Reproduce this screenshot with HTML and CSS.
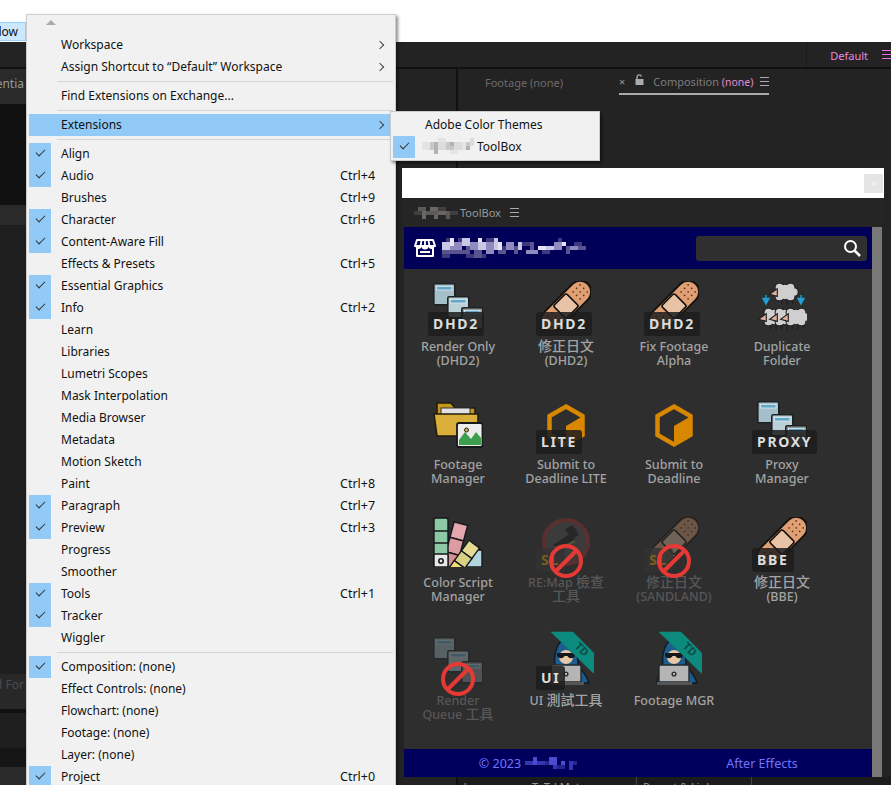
FILE: index.html
```html
<!DOCTYPE html>
<html lang="en">
  <head>
    <meta charset="UTF-8" />
    <meta name="viewport" content="width=device-width, initial-scale=1.0" />
    <link rel="stylesheet" href="styles.css">
    <title>ToolBox</title>
  </head>

  <body>
    <!-- shared icon drawings -->
    <svg class="defs" width="0" height="0">
      <defs>
        <g id="win">
          <rect x="0.8" y="0.8" width="21" height="21" rx="1.5" stroke="#1b2225" stroke-width="1.6" />
          <rect x="3.5" y="3.5" width="15.5" height="3.5" fill="#5fa8cc" stroke="#dfe8ec" stroke-width="0.8" />
        </g>
        <symbol id="icon-windows" viewBox="0 0 50 50">
          <use href="#win" x="0" y="2" fill="#a5c0ca" />
          <use href="#win" x="14" y="15" fill="#bcd0d8" />
          <use href="#win" x="28" y="26" fill="#8f9598" />
        </symbol>
        <symbol id="icon-bandage" viewBox="0 0 50 50">
          <g transform="rotate(-45 25 25)">
            <rect x="-6" y="14" width="62" height="22" rx="11" fill="#e0a074" stroke="#17130f" stroke-width="2" />
            <g fill="#5c3a22">
              <circle cx="40" cy="20" r="0.9" /><circle cx="45" cy="20" r="0.9" /><circle cx="50" cy="20" r="0.9" />
              <circle cx="40" cy="25" r="0.9" /><circle cx="45" cy="25" r="0.9" /><circle cx="50" cy="25" r="0.9" />
              <circle cx="40" cy="30" r="0.9" /><circle cx="45" cy="30" r="0.9" /><circle cx="50" cy="30" r="0.9" />
              <circle cx="0" cy="20" r="0.9" /><circle cx="5" cy="20" r="0.9" /><circle cx="10" cy="20" r="0.9" />
              <circle cx="0" cy="25" r="0.9" /><circle cx="5" cy="25" r="0.9" /><circle cx="10" cy="25" r="0.9" />
              <circle cx="0" cy="30" r="0.9" /><circle cx="5" cy="30" r="0.9" /><circle cx="10" cy="30" r="0.9" />
            </g>
            <rect x="16" y="16" width="18" height="18" rx="2" fill="#e8c3a5" stroke="#17130f" stroke-width="1.6" />
          </g>
        </symbol>
        <g id="sheep">
          <path d="M-3 7v4M2 8v4M7 7v4" stroke="#222" stroke-width="1.4" />
          <g fill="#222">
            <circle cx="0" cy="0" r="7.5" /><circle cx="-5" cy="-4" r="4.5" /><circle cx="5" cy="-4" r="4.5" />
            <circle cx="-5" cy="4" r="4.5" /><circle cx="5" cy="4" r="4.5" /><circle cx="8" cy="0" r="4.5" />
          </g>
          <g fill="#cfcfcf">
            <circle cx="0" cy="0" r="6.5" /><circle cx="-5" cy="-4" r="3.5" /><circle cx="5" cy="-4" r="3.5" />
            <circle cx="-5" cy="4" r="3.5" /><circle cx="5" cy="4" r="3.5" /><circle cx="8" cy="0" r="3.5" />
          </g>
          <path d="M-7 -3L-14 2L-7 4z" fill="#e3b09c" stroke="#222" stroke-width="1" />
        </g>
        <symbol id="icon-sheep" viewBox="0 0 50 50">
          <use href="#sheep" transform="translate(28 11) scale(1.1)" />
          <path d="M9 14v4M6 17.5h6L9 23zM44 14v4M41 17.5h6L44 23z" fill="#1f9fd6" stroke="#1f9fd6" stroke-width="1.4" />
          <use href="#sheep" transform="translate(17 36) scale(1.1)" />
          <use href="#sheep" transform="translate(28 36) scale(1.1)" />
          <use href="#sheep" transform="translate(39 36) scale(1.1)" />
        </symbol>
        <symbol id="icon-folder" viewBox="0 0 50 50">
          <path d="M4 4h14l4 5h20v12H4z" fill="#c2951c" stroke="#221c0c" stroke-width="1.6" />
          <rect x="8" y="9" width="29" height="10" fill="#e2e2e2" stroke="#333" />
          <path d="M1 15h44v22H4z" fill="#d9ae39" stroke="#221c0c" stroke-width="1.6" />
          <rect x="24" y="24" width="25.5" height="24" rx="2" fill="#ececec" stroke="#15191a" stroke-width="1.8" />
          <circle cx="33.5" cy="31" r="2" fill="#d9ae39" stroke="#222" />
          <path d="M26 46V41L32 33L38 40L43 33L48 39V46z" fill="#3d9e4e" />
        </symbol>
        <symbol id="icon-hex" viewBox="0 0 50 50">
          <path d="M25 7.5L41.5 17V36L25 45.5L8.5 36V17z" fill="none" stroke="#d98600" stroke-width="4.5" />
          <path d="M25 46V27L42 17V36z" fill="#d98600" />
        </symbol>
        <symbol id="icon-fan" viewBox="0 0 50 50">
          <g stroke="#15191a" stroke-width="1.4">
            <rect x="16" y="33" width="17" height="17" rx="1" fill="#a5d2e3" />
            <rect x="33" y="33" width="16" height="17" rx="1" fill="#b3d5df" />
            <g transform="rotate(15 8 50)">
              <rect x="9" y="3" width="14" height="16" fill="#e4a7ad" />
              <rect x="9" y="19" width="14" height="15" fill="#dd9ba2" />
              <path d="M9 34h14v14H9z" fill="#d98e97" />
            </g>
            <g transform="rotate(36 8 50)">
              <rect x="15" y="12" width="13" height="13" fill="#e4da94" />
              <rect x="15" y="25" width="13" height="12" fill="#d9cf85" />
              <path d="M15 37h13L15 50z" fill="#f0e070" />
            </g>
            <rect x="1" y="1" width="14" height="49" rx="2" fill="#8ec9a6" />
            <path d="M1 14h14M1 26h14" />
            <rect x="1" y="37" width="14" height="13" rx="1" fill="#e8e8e8" />
          </g>
          <circle cx="8" cy="44" r="2.2" fill="#e8e8e8" stroke="#15191a" stroke-width="1.6" />
        </symbol>
        <symbol id="icon-hacker" viewBox="0 0 50 50" overflow="visible">
          <path d="M8 48C9 40 11 36 14 32C12 16 18 5 24 5C32 6 38 20 37 32C42 36 46 42 48 48z" fill="#1d5d8e" stroke="#121a22" stroke-width="1.5" />
          <circle cx="25" cy="22" r="7" fill="#e6c6a5" />
          <path d="M16 18h18v3c-2 3-6 3-7.5 0h-3c-1.500 3-5.500 3-7.500 0z" fill="#15181b" />
          <rect x="10" y="30" width="30" height="17" rx="1" fill="#b5b5b5" stroke="#23282b" stroke-width="1.4" />
          <rect x="8" y="47" width="35" height="3" fill="#555" />
          <circle cx="25" cy="39" r="2.6" fill="#333" />
          <circle cx="25" cy="39" r="1" fill="#ddd" />
          <path d="M9.500 -3.300H32L53 18V39z" fill="#0b8a7d" />
          <text x="33" y="12" class="ribbonText" transform="rotate(45 33 12)">TD</text>
        </symbol>
        <symbol id="icon-remap" viewBox="0 0 50 50">
          <circle cx="25" cy="25" r="22" fill="#555" stroke="#a33" stroke-width="4" />
          <path d="M12 28L30 16L34 22L20 32zM32 8l6 10-8 4-6-10z" fill="#1b1b1b" />
          <path d="M10 36L34 24" stroke="#7fa35a" stroke-width="2" />
        </symbol>
        <symbol id="icon-forbid" viewBox="0 0 34 34">
          <circle cx="17" cy="17" r="15" fill="none" stroke="#e53935" stroke-width="4" />
          <path d="M27 7L7 27" stroke="#e53935" stroke-width="4" />
        </symbol>
      </defs>
    </svg>

    <div class="screen">
      <div class="titleBar">
        <span class="windowTab"><span>Window</span></span>
      </div>
      <div class="workspaceBar">
        <span class="workspaceName">Default</span>
        <span class="burger pink"></span>
      </div>

      <div class="panes">
        <div class="sideStrip">
          <div class="s1"><span>Essentia</span></div>
          <div class="s2"></div>
          <div class="s3"></div>
          <div class="s4"></div>
          <div class="s5"><span>d For</span></div>
          <div class="s6"></div>
          <div class="s7"></div>
          <div class="s8"></div>
          <div class="s9"></div>
        </div>
        <div class="midStrip"></div>
        <div class="viewer">
          <div class="viewerTabs">
            <span class="viewerTab">Footage&nbsp;(none)</span>
            <span class="viewerTab current">
              <span class="tabClose">×</span>
              <svg class="lock" width="9" height="11" viewBox="0 0 9 11"><path d="M2 5V3a2.300 2.300 0 0 1 4.500-.5" fill="none" stroke="#aaa" stroke-width="1.4" /><rect x="0.5" y="5" width="8" height="6" fill="#aaa" /></svg>
              <span>Composition <em>(none)</em></span>
              <span class="burger"></span>
            </span>
          </div>
          <div class="viewerBody"></div>
          <div class="timelineHead">
            <span class="tlMode">Mode</span>
            <span class="tlMat">T&nbsp; TrkMat</span>
            <span class="tlParent">Parent &amp; Link</span>
          </div>
        </div>
      </div>

      <!-- toolbox window -->
      <section class="toolWindow">
        <div class="toolWhite"><span class="toolClose">×</span></div>
        <div class="toolTab">
          <svg class="mosaic" width="44" height="12" viewBox="0 0 44 12">
            <path fill="#3f3f3f" d="M0 4h8v4H0zM24 0h8v4h-8zM36 4h8v4h-8z" />
            <path fill="#5a5a5a" d="M4 0h8v4H4zM12 4h12v4H12zM32 4h4v8h-4z" />
            <path fill="#6b6660" d="M8 4h4v8H8zM16 0h8v4h-8zM24 4h8v4h-8zM20 8h4v4h-4z" />
          </svg>
          <span>ToolBox</span>
          <span class="burger"></span>
        </div>
        <div class="toolBody">
          <div class="toolMain">
            <header class="toolHead">
              <svg class="store" width="22" height="20" viewBox="0 0 22 20">
                <path d="M3 2h16l2 6H1zM3 10v8h16v-8" fill="none" stroke="#fff" stroke-width="2" stroke-linejoin="round" />
                <path d="M7.500 2.500L6.500 8M11 2.500V8M14.500 2.500L15.500 8" stroke="#fff" stroke-width="1.800" />
                <path d="M1.500 8a3 3 0 0 0 6 0a3 3 0 0 0 7 0a3 3 0 0 0 6 0z" fill="#fff" />
                <path d="M6 14h10" stroke="#fff" stroke-width="2" />
              </svg>
              <svg class="mosaic" width="148" height="20" viewBox="0 0 148 20">
                <path fill="#3c3a7c" d="M4 0h4v4H4zM16 0h4v4h-4zM44 0h8v4h-8zM0 16h8v4H0zM24 16h8v4h-8zM40 16h4v4h-4zM60 8h4v8h-4zM80 4h8v4h-8zM100 12h8v4h-8zM116 0h4v4h-4zM132 4h8v4h-8z" />
                <path fill="#c9c6e6" d="M0 4h8v8H0zM20 0h8v8h-8zM36 4h8v8h-8zM52 0h4v12h-4zM76 4h4v8h-4zM104 8h8v4h-8z" />
                <path fill="#8f8abf" d="M8 8h12v4H8zM12 4h8v4h-8zM28 4h8v8h-8zM44 4h8v12h-8zM64 4h8v8h-8zM84 12h12v4H84zM112 4h8v8h-8zM128 8h8v4h-8z" />
                <path fill="#e6e4f4" d="M8 0h4v8H8zM36 0h4v4h-4zM56 4h4v8h-4zM96 8h8v4h-8zM120 4h4v4h-4z" />
                <path fill="#59538f" d="M0 12h12v4H0zM12 12h12v4H12zM24 8h4v8h-4zM32 12h8v8h-8zM56 12h8v4h-8zM72 8h4v8h-4zM88 4h4v8h-4zM124 8h4v8h-4zM136 8h8v4h-8z" />
              </svg>
              <div class="searchBox">
                <svg width="18" height="18" viewBox="0 0 18 18"><circle cx="7.500" cy="7.500" r="5.500" fill="none" stroke="#fff" stroke-width="2" /><path d="M11.500 11.500L17 17" stroke="#fff" stroke-width="2.500" /></svg>
              </div>
            </header>

            <div class="toolGrid">
              <div class="tool">
                <svg class="toolIcon"><use href="#icon-windows" /></svg>
                <span class="badge">DHD2</span>
                <p>Render Only<br>(DHD2)</p>
              </div>
              <div class="tool">
                <svg class="toolIcon"><use href="#icon-bandage" /></svg>
                <span class="badge">DHD2</span>
                <p><span class="zh">修正日文</span><br>(DHD2)</p>
              </div>
              <div class="tool">
                <svg class="toolIcon"><use href="#icon-bandage" /></svg>
                <span class="badge">DHD2</span>
                <p>Fix Footage<br>Alpha</p>
              </div>
              <div class="tool">
                <svg class="toolIcon"><use href="#icon-sheep" /></svg>
                <p>Duplicate<br>Folder</p>
              </div>

              <div class="tool">
                <svg class="toolIcon"><use href="#icon-folder" /></svg>
                <p>Footage<br>Manager</p>
              </div>
              <div class="tool">
                <svg class="toolIcon"><use href="#icon-hex" /></svg>
                <span class="badge">LITE</span>
                <p>Submit to<br>Deadline LITE</p>
              </div>
              <div class="tool">
                <svg class="toolIcon"><use href="#icon-hex" /></svg>
                <p>Submit to<br>Deadline</p>
              </div>
              <div class="tool">
                <svg class="toolIcon"><use href="#icon-windows" /></svg>
                <span class="badge">PROXY</span>
                <p>Proxy<br>Manager</p>
              </div>

              <div class="tool">
                <svg class="toolIcon"><use href="#icon-fan" /></svg>
                <p>Color Script<br>Manager</p>
              </div>
              <div class="tool off">
                <svg class="toolIcon"><use href="#icon-remap" /></svg>
                <span class="badge">SL</span>
                <svg class="forbid"><use href="#icon-forbid" /></svg>
                <p>RE:Map <span class="zh">檢查</span><br><span class="zh">工具</span></p>
              </div>
              <div class="tool off">
                <svg class="toolIcon"><use href="#icon-bandage" /></svg>
                <span class="badge">SL</span>
                <svg class="forbid"><use href="#icon-forbid" /></svg>
                <p><span class="zh">修正日文</span><br>(SANDLAND)</p>
              </div>
              <div class="tool">
                <svg class="toolIcon"><use href="#icon-bandage" /></svg>
                <span class="badge">BBE</span>
                <p><span class="zh">修正日文</span><br>(BBE)</p>
              </div>

              <div class="tool off">
                <svg class="toolIcon"><use href="#icon-windows" /></svg>
                <svg class="forbid"><use href="#icon-forbid" /></svg>
                <p>Render<br>Queue <span class="zh">工具</span></p>
              </div>
              <div class="tool">
                <svg class="toolIcon"><use href="#icon-hacker" /></svg>
                <span class="badge">UI</span>
                <p>UI <span class="zh">測試工具</span></p>
              </div>
              <div class="tool">
                <svg class="toolIcon"><use href="#icon-hacker" /></svg>
                <p>Footage MGR</p>
              </div>
            </div>

            <footer class="toolFoot">
              <span class="footCell">© 2023
                <svg class="mosaic" width="52" height="13" viewBox="0 0 52 13">
                  <path fill="#3434b4" d="M0 4h8v4H0zM12 4h8v4h-8zM28 8h8v4h-8zM44 4h4v9h-4z" />
                  <path fill="#4c4cd0" d="M8 0h4v8H8zM24 0h8v8h-8zM36 4h4v4h-4z" />
                  <path fill="#25258f" d="M20 4h4v4h-4zM32 8h8v4h-8zM48 4h4v4h-4z" />
                </svg>
              </span>
              <span class="footCell">After Effects</span>
            </footer>
          </div>
          <div class="toolScroll"></div>
        </div>
      </section>

      <!-- window menu -->
      <div class="menu">
        <div class="scrollUp"></div>
        <ul>
          <li class="sub"><i></i><span>Workspace</span></li>
          <li class="sub"><i></i><span>Assign Shortcut to “Default” Workspace</span></li>
          <li class="sep"></li>
          <li><i></i><span>Find Extensions on Exchange...</span></li>
          <li class="sep"></li>
          <li class="sub active"><i></i><span>Extensions</span></li>
          <li class="sep"></li>
          <li class="on"><i></i><span>Align</span></li>
          <li class="on"><i></i><span>Audio</span><kbd>Ctrl+4</kbd></li>
          <li><i></i><span>Brushes</span><kbd>Ctrl+9</kbd></li>
          <li class="on"><i></i><span>Character</span><kbd>Ctrl+6</kbd></li>
          <li class="on"><i></i><span>Content-Aware Fill</span></li>
          <li><i></i><span>Effects &amp; Presets</span><kbd>Ctrl+5</kbd></li>
          <li class="on"><i></i><span>Essential Graphics</span></li>
          <li class="on"><i></i><span>Info</span><kbd>Ctrl+2</kbd></li>
          <li><i></i><span>Learn</span></li>
          <li><i></i><span>Libraries</span></li>
          <li><i></i><span>Lumetri Scopes</span></li>
          <li><i></i><span>Mask Interpolation</span></li>
          <li><i></i><span>Media Browser</span></li>
          <li><i></i><span>Metadata</span></li>
          <li><i></i><span>Motion Sketch</span></li>
          <li><i></i><span>Paint</span><kbd>Ctrl+8</kbd></li>
          <li class="on"><i></i><span>Paragraph</span><kbd>Ctrl+7</kbd></li>
          <li class="on"><i></i><span>Preview</span><kbd>Ctrl+3</kbd></li>
          <li><i></i><span>Progress</span></li>
          <li><i></i><span>Smoother</span></li>
          <li class="on"><i></i><span>Tools</span><kbd>Ctrl+1</kbd></li>
          <li class="on"><i></i><span>Tracker</span></li>
          <li><i></i><span>Wiggler</span></li>
          <li class="sep"></li>
          <li class="on"><i></i><span>Composition: (none)</span></li>
          <li><i></i><span>Effect Controls: (none)</span></li>
          <li><i></i><span>Flowchart: (none)</span></li>
          <li><i></i><span>Footage: (none)</span></li>
          <li><i></i><span>Layer: (none)</span></li>
          <li class="on"><i></i><span>Project</span><kbd>Ctrl+0</kbd></li>
        </ul>
      </div>

      <div class="menu submenu">
        <ul>
          <li><i></i><span>Adobe Color Themes</span></li>
          <li class="on"><i></i>
            <span class="mosaicRow">
              <svg class="mosaic" width="52" height="16" viewBox="0 0 52 16">
                <path fill="#e4e4e4" d="M0 4h8v8H0zM16 0h8v4h-8zM28 12h8v4h-8zM40 4h4v8h-4z" />
                <path fill="#c9c9c9" d="M8 4h8v8H8zM24 4h8v8h-8zM44 4h4v8h-4z" />
                <path fill="#dcdcdc" d="M16 4h8v8h-8zM32 4h8v8h-8zM48 0h4v8h-4z" />
                <path fill="#b2b2b2" d="M12 4h4v4h-4zM28 4h4v4h-4zM12 8h4v8h-4zM44 8h4v4h-4z" />
              </svg>
              ToolBox
            </span>
          </li>
        </ul>
      </div>
    </div>
  </body>
</html>
```

FILE: styles.css
```css
body {
  margin: 0px;
  background-color: #232323;
  font-family: "Noto Sans", "Noto Sans CJK TC", sans-serif;
}
.defs {
  position: absolute;
}
.screen {
  position: relative;
  display: flex;
  flex-direction: column;
  width: 891px;
  height: 785px;
  overflow: hidden;
  background-color: #232323;
}

/* <<<< app frame behind the windows >>>> */
.titleBar {
  display: flex;
  align-items: flex-end;
  height: 42px;
  background-color: #fff;
}
.windowTab {
  display: flex;
  justify-content: flex-end;
  align-items: center;
  box-sizing: border-box;
  width: 26px;
  height: 19px;
  margin-bottom: 1px;
  padding-right: 7px;
  overflow: hidden;
  background-color: #cce8ff;
  border: 1px solid #99d1ff;
  border-left: none;
  font-size: 12px;
  color: #111;
}
.windowTab span {
  flex-shrink: 0;
}
.workspaceBar {
  display: flex;
  justify-content: flex-end;
  align-items: center;
  gap: 14px;
  box-sizing: border-box;
  height: 27px;
  background-color: #232323;
  border-bottom: 2px solid #111;
}
.workspaceName {
  display: flex;
  align-items: center;
  align-self: stretch;
  padding: 2px 0px 0px 23px;
  border-left: 1px solid #1a1a1a;
  font-size: 11px;
  color: #e88adf;
}
.burger {
  display: inline-block;
  flex-shrink: 0;
  width: 9px;
  height: 7px;
  border-top: 1px solid #aaa;
  border-bottom: 1px solid #aaa;
  background: linear-gradient(#aaa, #aaa) center / 100% 1px no-repeat;
}
.burger.pink {
  border-color: #f070e0;
  background-image: linear-gradient(#f070e0, #f070e0);
}
.panes {
  display: flex;
  flex: 1;
}
.sideStrip {
  display: flex;
  flex-direction: column;
  width: 26px;
  color: #999;
  font-size: 12px;
}
.sideStrip div {
  display: flex;
  justify-content: flex-end;
  align-items: center;
  box-sizing: border-box;
  overflow: hidden;
}
.sideStrip span {
  flex-shrink: 0;
  padding-right: 2px;
}
.s1 { height: 35px; padding-bottom: 7px; background-color: #2a2a2a; }
.s2 { height: 101px; background-color: #111; }
.s3 { height: 20px; background-color: #2a2a2a; }
.s4 { height: 449px; background-color: #1f1f1f; }
.s5 { height: 35px; padding-bottom: 14px; background-color: #282828; color: #4c4c4c; }
.s6 { height: 4px; background-color: #111; }
.s7 { height: 35px; background-color: #1f1f1f; }
.s8 { height: 19px; background-color: #161616; }
.s9 { flex: 1; background-color: #2a2a2a; }
.midStrip {
  width: 430px;
  background-color: #232323;
  border-right: 2px solid #111;
}
.viewer {
  display: flex;
  flex-direction: column;
  flex: 1;
}
.viewerTabs {
  display: flex;
  align-items: flex-start;
  height: 29px;
  padding-left: 27px;
  font-size: 11px;
  white-space: nowrap;
  color: #6b6b6b;
}
.viewerTab {
  display: flex;
  align-items: center;
  box-sizing: border-box;
  width: 134px;
  height: 26px;
}
.viewerTab.current {
  width: 150px;
  border-bottom: 2px solid #aaa;
  color: #7d7d7d;
}
.lock {
  margin: -3px 9px 0px 10px;
}
.viewerTab .burger {
  margin-left: auto;
}
.viewerTab em {
  font-size: 10.5px;
  font-style: normal;
  color: #e58ad0;
}
.tabClose {
  color: #999;
}
.viewerBody {
  flex: 1;
}
.timelineHead {
  display: flex;
  align-items: flex-start;
  height: 8px;
  overflow: hidden;
  background-color: #1c1c1c;
  font-size: 11px;
  line-height: 20px;
  color: #999;
}
.timelineHead span {
  box-sizing: border-box;
  height: 8px;
  padding-left: 6px;
}
.tlMode {
  width: 90px;
  margin-left: -22px;
  border-left: 1px solid #444;
}
.tlMat { width: 110px; }
.tlParent {
  width: 116px;
  border-left: 1px solid #444;
  border-right: 1px solid #444;
}

/* <<<< ToolBox window >>>> */
.toolWindow {
  position: absolute;
  left: 402px;
  top: 168px;
  display: flex;
  flex-direction: column;
  width: 482px;
  height: 609px;
}
.toolWhite {
  display: flex;
  justify-content: flex-end;
  align-items: center;
  height: 30px;
  flex-shrink: 0;
  padding-right: 1px;
  background-color: #fff;
}
.toolClose {
  width: 19px;
  height: 19px;
  background-color: #e5e5e5;
  color: #f5f5f5;
  font-size: 12px;
  line-height: 19px;
  text-align: center;
}
.toolTab {
  display: flex;
  align-items: center;
  height: 29px;
  flex-shrink: 0;
  margin: 0px 1px;
  padding-left: 11px;
  background-color: #252525;
  font-size: 11px;
  color: #9a9a9a;
}
.toolTab .mosaic {
  margin-right: 2px;
}
.toolTab .burger {
  margin-left: 9px;
}
.toolBody {
  display: flex;
  flex: 1;
  min-height: 0;
  margin: 0px 2px;
}
.toolMain {
  display: flex;
  flex-direction: column;
  width: 468px;
}
.toolScroll {
  width: 10px;
  background-color: #787878;
}
.toolHead {
  display: flex;
  align-items: center;
  height: 42px;
  flex-shrink: 0;
  padding: 0px 5px 0px 10px;
  background-color: #000058;
}
.store {
  margin-right: 6px;
}
.searchBox {
  display: flex;
  justify-content: flex-end;
  align-items: center;
  box-sizing: border-box;
  width: 171px;
  height: 25px;
  margin-left: auto;
  padding-right: 6px;
  border-radius: 3px;
  background-color: #2f2f2f;
}
.toolGrid {
  display: grid;
  grid-template-columns: repeat(4, 108px);
  grid-auto-rows: 118px;
  flex: 1;
  background-color: #2e2e2e;
}
.tool {
  position: relative;
  padding-top: 12px;
  text-align: center;
}
.tool p {
  margin: 9px 0px 0px;
  font-size: 12.5px;
  font-weight: 500;
  line-height: 14px;
  color: #a3a3a3;
}
.zh {
  font-size: 14px;
  line-height: 0;
}
.toolIcon {
  display: block;
  width: 50px;
  height: 50px;
  margin: 0px auto;
  overflow: visible;
}
.badge {
  position: absolute;
  left: calc(50% - 30px);
  top: 43px;
  height: 24px;
  padding: 0px 5px;
  border-radius: 3px;
  background-color: rgba(28, 28, 28, 0.85);
  font-size: 14px;
  font-weight: 700;
  line-height: 24px;
  letter-spacing: 1.7px;
  color: #ddd;
}
.forbid {
  position: absolute;
  left: calc(50% - 17px);
  top: 39px;
  width: 34px;
  height: 34px;
}
.off .toolIcon {
  opacity: 0.35;
}
.off .badge {
  color: #7a5d1c;
  background-color: rgba(50, 50, 50, 0.8);
}
.off p {
  color: #575757;
}
.ribbonText {
  font-size: 11px;
  font-weight: 700;
  fill: #0b4f48;
}
.toolFoot {
  display: grid;
  grid-template-columns: 248px 220px;
  align-items: center;
  height: 28px;
  flex-shrink: 0;
  background-color: #00005c;
  font-size: 12.5px;
  color: #7272ff;
}
.footCell {
  display: flex;
  justify-content: center;
  align-items: center;
  gap: 4px;
}

/* <<<< Menus >>>> */
.menu {
  position: absolute;
  left: 26px;
  top: 14px;
  box-sizing: border-box;
  width: 370px;
  height: 790px;
  padding: 0px 2px;
  background-color: #f1f1f1;
  border: 1px solid #ccc;
  box-shadow: 2px 2px 3px rgba(0, 0, 0, 0.45);
  font-size: 12px;
  color: #111;
}
.scrollUp {
  width: 0px;
  height: 0px;
  margin: 5px 0px 9px 17px;
  border: 5px solid transparent;
  border-top: none;
  border-bottom: 5px solid #aaa;
}
.menu ul {
  margin: 0px;
  padding: 0px;
  list-style: none;
}
.menu li {
  position: relative;
  display: flex;
  align-items: center;
  height: 22px;
}
.menu li > span {
  padding-bottom: 2px;
}
.menu li i {
  position: relative;
  flex-shrink: 0;
  width: 22px;
  height: 22px;
  margin-right: 10px;
}
.menu li.on i {
  background-color: #91c9f7;
}
.menu li.on i::after {
  content: "";
  position: absolute;
  left: 7px;
  top: 6px;
  width: 8px;
  height: 4px;
  border-left: 1.5px solid #333;
  border-bottom: 1.5px solid #333;
  transform: rotate(-45deg);
}
.menu li.active {
  background-color: #91c9f7;
}
.menu li.sub::after {
  content: "";
  position: absolute;
  right: 10px;
  top: 8px;
  width: 5px;
  height: 5px;
  border-top: 1px solid #444;
  border-right: 1px solid #444;
  transform: rotate(45deg);
}
.menu li.sep {
  height: 1px;
  margin: 3px 0px 3px 28px;
  background-color: #d6d6d6;
}
.menu kbd {
  position: absolute;
  left: 311px;
  padding-bottom: 2px;
  font-family: inherit;
  font-size: 12.5px;
}
.submenu {
  left: 390px;
  top: 111px;
  width: 210px;
  height: 50px;
  padding-top: 2px;
}
.mosaicRow {
  display: flex;
  align-items: center;
  gap: 3px;
  margin-left: -3px;
}
```
